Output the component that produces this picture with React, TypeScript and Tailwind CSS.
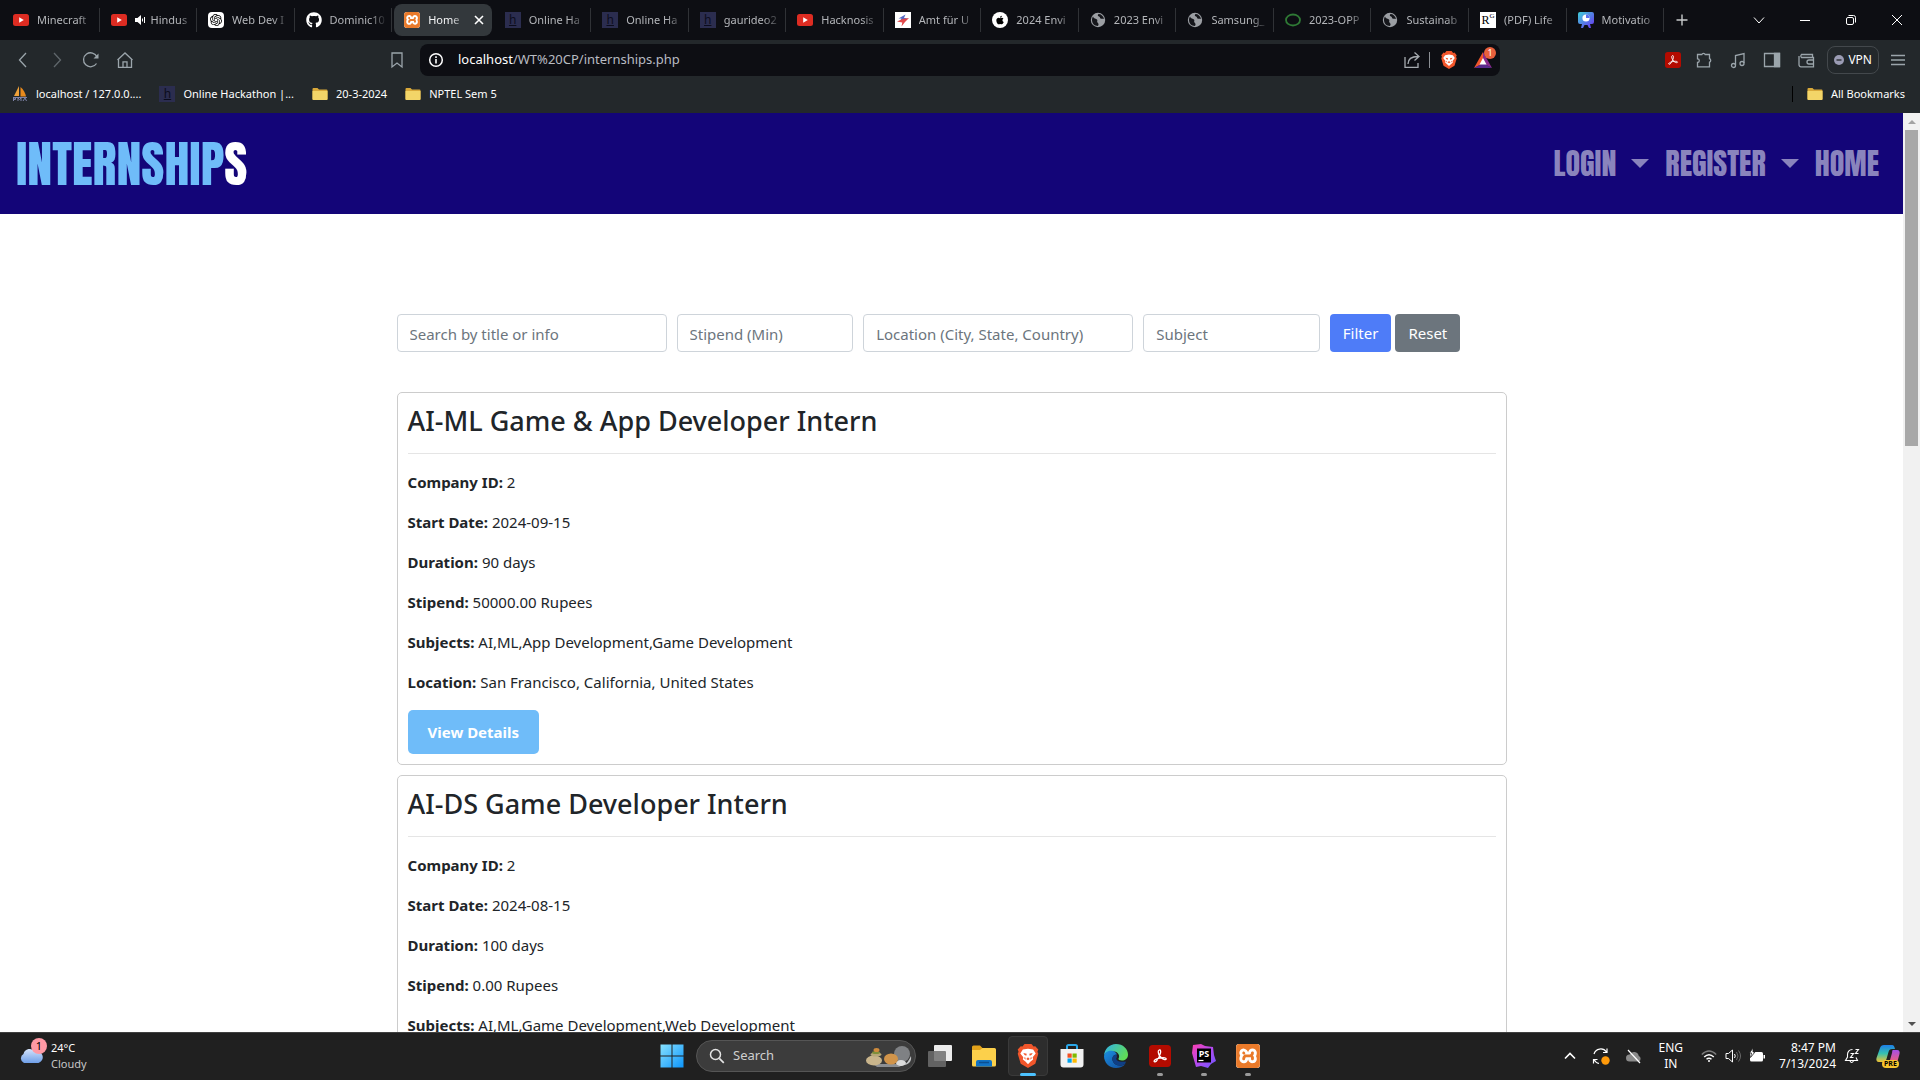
import React from "react";
import { FaApple, FaGithub } from "react-icons/fa";
import { SiOpenai, SiXampp } from "react-icons/si";

type IconProps = { className?: string };

/* ---------- Site icons ---------- */

function YouTubeIcon() {
  return (
    <svg className="h-4 w-4" viewBox="0 0 16 16">
      <rect y="2" width="16" height="12" rx="2.5" fill="#dd2c22" />
      <path d="M6.2 5.3v5.4L10.8 8z" fill="#fff" />
    </svg>
  );
}

function ChatIcon() {
  return (
    <span className="flex h-4 w-4 items-center justify-center rounded-sm bg-white text-black">
      <SiOpenai className="h-3 w-3" />
    </span>
  );
}

function GithubIcon() {
  return <FaGithub className="h-4 w-4 text-white" />;
}

function XamppIcon({ className = "h-4 w-4" }: IconProps) {
  return <SiXampp className={`${className} rounded-[3px] bg-white text-[#ea7a2a]`} />;
}

function HackIcon() {
  return (
    <span className="flex h-4 w-4 items-center justify-center bg-[#2b2d4f] text-xs leading-4 text-[#0b0c1c] underline">
      h
    </span>
  );
}

function AmtIcon() {
  return (
    <svg className="h-4 w-4" viewBox="0 0 16 16">
      <rect width="16" height="16" fill="#fff" />
      <path d="M10.500 2.500 3.500 6.500h3L5 9l8-3H9z" fill="#5468c4" />
      <path d="m2 9.500 5.500-2.500L14 6l-4 4-3.500 4.500.800-4z" fill="#e0484a" />
    </svg>
  );
}

function AppleIcon() {
  return (
    <span className="flex h-4 w-4 items-center justify-center rounded-full bg-white text-black">
      <FaApple className="h-2.5 w-2.5" />
    </span>
  );
}

function GlobeIcon() {
  return (
    <svg className="h-4 w-4" viewBox="0 0 16 16">
      <circle cx="8" cy="8" r="7.200" fill="#9b9ea3" />
      <path d="M3 4.500C4 7 6 6.500 7 7.500s-.5 2 .5 3 1.500 1.500.5 3.500C4 14 2 11 2 8c0-1.500.4-2.500 1-3.500z" fill="#15161b" />
      <path d="M8.500 2c-1 1-1 2 .5 2.500s.5 1.500 1.500 2 2.500 0 3.500.5C13.500 4 11 2 8.500 2z" fill="#15161b" />
    </svg>
  );
}

function RingIcon() {
  return (
    <svg className="h-4 w-4" viewBox="0 0 16 16">
      <ellipse cx="8" cy="8" rx="7" ry="5.500" fill="none" stroke="#2f7a35" strokeWidth="1.800" />
    </svg>
  );
}

function GateIcon() {
  return (
    <span className="flex h-4 w-4 items-center justify-center bg-white font-['Liberation_Serif'] text-xs leading-4 text-black">
      R<sup className="text-[7px] leading-none">G</sup>
    </span>
  );
}

function MotivationIcon() {
  return (
    <svg className="h-4 w-4" viewBox="0 0 16 16">
      <defs>
        <linearGradient id="motiv" x1="0" y1="0" x2="1" y2="1">
          <stop offset="0" stopColor="#3fd0d8" />
          <stop offset="1" stopColor="#6a2ff0" />
        </linearGradient>
      </defs>
      <path d="M2 0h12a2 2 0 0 1 2 2v8a2 2 0 0 1-2 2h-2l1 4h-2l-1.500-3h-3L5 16H3l1-4H2a2 2 0 0 1-2-2V2a2 2 0 0 1 2-2z" fill="url(#motiv)" />
      <circle cx="8" cy="6" r="3.600" fill="#fff" />
      <path d="M8 6V2.400A3.600 3.600 0 0 1 11.600 6z" fill="#5a6ff0" />
    </svg>
  );
}

function SailIcon() {
  return (
    <svg className="h-4 w-4" viewBox="0 0 16 16">
      <path d="M7 0 2 10h5z" fill="#f0a23a" />
      <path d="M8.500 1c3 2.500 5 6 5.500 9.500H8.500z" fill="#e98a1c" />
      <path d="M1 11.500h14M1.500 15v-3h2v1.500h-2M6 15v-3l1.500 1.500L9 12v3M11 15l2-3 1.500 3" fill="none" stroke="#7f83a8" strokeWidth="1" />
    </svg>
  );
}

function FolderIcon() {
  return (
    <svg className="h-4 w-4" viewBox="0 0 16 16">
      <path d="M.5 3a1 1 0 0 1 1-1h4l1.500 1.500h7.500a1 1 0 0 1 1 1V13a1 1 0 0 1-1 1h-13a1 1 0 0 1-1-1z" fill="#d9a93a" />
      <path d="M.5 5h15v8a1 1 0 0 1-1 1h-13a1 1 0 0 1-1-1z" fill="#f3d568" />
    </svg>
  );
}

function AcrobatIcon({ className = "h-4 w-4" }: IconProps) {
  return (
    <svg className={className} viewBox="0 0 24 24">
      <rect width="24" height="24" rx="4" fill="#b30b00" />
      <path
        d="M11 5.500c1.500-.8 2 .9 1.600 3-.7 3.200-2.700 7-4.700 9.300-1 1-2.600.7-2.300-.4.500-1.500 4.400-3 8-3.400 2.800-.3 5.300.2 5.200 1.300-.2 1.300-2.800.8-4.500-.5-2.300-1.700-4-4.800-4.200-7.200-.1-1.100.2-1.800.9-2.100z"
        fill="none"
        stroke="#fff"
        strokeWidth="1.400"
      />
    </svg>
  );
}

function BraveIcon({ className = "h-4 w-4" }: IconProps) {
  return (
    <svg className={className} viewBox="0 0 24 28">
      <path d="M8 0h8l2.500 3 2-.5L24 6.500 23 9l1 2.500-3.500 11.500L12 28 3.500 23 0 11.500 1 9 0 6.500l3.500-4 2 .5z" fill="#f1562b" />
      <path
        d="M6 6.500 12 5.500l6 1 3 4.500-3.500 4.500.5 2.500-3 2.500L12 23.500 9 20.500 6 18l.5-2.500L3 11z"
        fill="#fff"
      />
      <path d="m6.500 10.500 4 .8-.5 2.500-2-1zM17.500 10.500l-4 .8.5 2.500 2-1zM12 15.500l-2 2 2 1.500 2-1.500zM8.500 15l-1 1.500 2 2zM15.500 15l1 1.500-2 2z" fill="#f1562b" />
    </svg>
  );
}

/* ---------- Browser tabs ---------- */

type Tab = { title: string; icon: React.ReactNode; audio?: boolean; active?: boolean };

const tabs: Tab[] = [
  { title: "Minecraft", icon: <YouTubeIcon /> },
  { title: "Hindus", icon: <YouTubeIcon />, audio: true },
  { title: "Web Dev I", icon: <ChatIcon /> },
  { title: "Dominic10", icon: <GithubIcon /> },
  { title: "Home", icon: <XamppIcon />, active: true },
  { title: "Online Ha", icon: <HackIcon /> },
  { title: "Online Ha", icon: <HackIcon /> },
  { title: "gaurideo2", icon: <HackIcon /> },
  { title: "Hacknosis", icon: <YouTubeIcon /> },
  { title: "Amt für U", icon: <AmtIcon /> },
  { title: "2024 Envi", icon: <AppleIcon /> },
  { title: "2023 Envi", icon: <GlobeIcon /> },
  { title: "Samsung_", icon: <GlobeIcon /> },
  { title: "2023-OPP", icon: <RingIcon /> },
  { title: "Sustainab", icon: <GlobeIcon /> },
  { title: "(PDF) Life", icon: <GateIcon /> },
  { title: "Motivatio", icon: <MotivationIcon /> },
];

function SpeakerIcon() {
  return (
    <svg className="h-3 w-3 shrink-0" viewBox="0 0 12 12">
      <path d="M0 4h2.500L6 1v10L2.500 8H0z" fill="#fff" />
      <path d="M7.500 4.500v3M9.500 3v6" stroke="#fff" strokeWidth="1" />
    </svg>
  );
}

function BrowserTab({ tab }: { tab: Tab }) {
  if (tab.active) {
    return (
      <div className="flex min-w-0 flex-1 items-center px-0.5">
        <div className="flex h-8 w-full items-center rounded-lg bg-[#33383c] pr-2 pl-2.5">
          <span className="shrink-0">{tab.icon}</span>
          <span className="ml-2 min-w-0 flex-1 text-[11px] whitespace-nowrap text-gray-100 [mask-image:linear-gradient(to_right,black_60%,transparent)]">
            {tab.title}
          </span>
          <button aria-label="Close tab" className="ml-2 shrink-0">
            <svg className="h-2.5 w-2.5" viewBox="0 0 10 10">
              <path d="m1 1 8 8M9 1 1 9" stroke="#fff" strokeWidth="1.600" />
            </svg>
          </button>
        </div>
      </div>
    );
  }
  return (
    <div className="flex min-w-0 flex-1 items-center">
      <span className="ml-[11px] shrink-0">{tab.icon}</span>
      <span className="ml-2 flex min-w-0 flex-1 items-center gap-1">
        {tab.audio && <SpeakerIcon />}
        <span className="min-w-0 flex-1 text-[11px] whitespace-nowrap text-[#b4b6ba] [mask-image:linear-gradient(to_right,black_70%,transparent)]">
          {tab.title}
        </span>
      </span>
      <span className="ml-1 h-6 w-px shrink-0 bg-[#303236]" />
    </div>
  );
}

function WindowButton({ label, children }: { label: string; children: React.ReactNode }) {
  return (
    <button aria-label={label} className="flex h-10 w-[46px] items-center justify-center">
      <svg className="h-3 w-3" viewBox="0 0 12 12" fill="none" stroke="#fff" strokeWidth="1">
        {children}
      </svg>
    </button>
  );
}

function TabStrip() {
  return (
    <div className="flex h-10 bg-[#0d0e13]">
      <div className="flex min-w-0 flex-1 pl-0.5">
        {tabs.map((tab, i) => (
          <BrowserTab key={i} tab={tab} />
        ))}
      </div>
      <button aria-label="New tab" className="mr-9 flex h-10 w-9 items-center justify-center">
        <svg className="h-3 w-3" viewBox="0 0 12 12">
          <path d="M6 .5v11M.5 6h11" stroke="#c8cacc" strokeWidth="1.400" />
        </svg>
      </button>
      <WindowButton label="Search tabs">
        <path d="m1 3.500 5 5.500 5-5.500" />
      </WindowButton>
      <WindowButton label="Minimize">
        <path d="M1 6.500h10" />
      </WindowButton>
      <WindowButton label="Restore">
        <rect x="1.500" y="3.500" width="7" height="7" rx="1.500" />
        <path d="M3.500 1.500h5a2 2 0 0 1 2 2v5" />
      </WindowButton>
      <WindowButton label="Close">
        <path d="m1 1 10 10M11 1 1 11" />
      </WindowButton>
    </div>
  );
}

/* ---------- Toolbar ---------- */

function ToolButton({ label, dim, children }: { label: string; dim?: boolean; children: React.ReactNode }) {
  return (
    <button aria-label={label} className={dim ? "shrink-0 opacity-50" : "shrink-0"}>
      <svg className="h-[18px] w-[18px]" viewBox="0 0 18 18" fill="none" stroke="#9ba5ab" strokeWidth="1.300">
        {children}
      </svg>
    </button>
  );
}

function Toolbar() {
  return (
    <div className="flex h-10 items-center">
      <div className="flex w-[420px] shrink-0 items-center justify-between pr-3.5 pl-3.5">
        <div className="flex items-center gap-4">
          <ToolButton label="Back">
            <path d="M12 2 5.500 9 12 16" />
          </ToolButton>
          <ToolButton label="Forward" dim>
            <path d="m6 2 6.500 7L6 16" />
          </ToolButton>
          <ToolButton label="Reload">
            <path d="M14.500 12.500A7 7 0 1 1 15 6" />
            <path d="M16.500 2.500v5h-5z" fill="#9ba5ab" stroke="none" />
          </ToolButton>
          <ToolButton label="Home">
            <path d="M2.500 8v8.300h13V8L9 2zM1.500 9 9 2l7.500 7M7 16.300v-5.500h4v5.500" />
          </ToolButton>
        </div>
        <ToolButton label="Bookmark this page">
          <path d="M4 2h10v14l-5-4-5 4z" />
        </ToolButton>
      </div>

      <div className="flex h-8 w-[1080px] min-w-0 shrink items-center rounded-lg bg-[#0d0e13] pr-0.5 pl-2">
        <svg className="h-4 w-4 shrink-0" viewBox="0 0 16 16">
          <circle cx="8" cy="8" r="6.300" fill="none" stroke="#fff" strokeWidth="1.500" />
          <path d="M8 7v4.500M8 4.300v1.600" stroke="#fff" strokeWidth="1.600" />
        </svg>
        <a href="#" aria-label="Address" className="ml-3.5 flex-1 text-[13px] text-[#b9bcc2]">
          <span className="text-white">localhost</span>/WT%20CP/internships.php
        </a>
        <button aria-label="Share" className="mr-2">
          <svg className="h-[18px] w-[18px]" viewBox="0 0 18 18" fill="none" stroke="#a6abb0" strokeWidth="1.300">
            <path d="M2 6v10.300h13V12M5 13c0-5 3.500-7.500 10-7.500M11.500 1.500l4.500 4-4.500 4" />
          </svg>
        </button>
        <span className="h-4 w-px bg-[#8b8f94]" />
        <button aria-label="Brave Shields" className="ml-2.5">
          <BraveIcon className="h-[18px] w-[18px]" />
        </button>
        <button aria-label="Brave Rewards" className="relative ml-4 pr-1.5">
          <svg className="h-[18px] w-[18px]" viewBox="0 0 18 18">
            <path d="M9 1 0 17l9-4.500z" fill="#f1562b" />
            <path d="m9 1 9 16-9-4.500z" fill="#8a2a8c" />
            <path d="m0 17 9-5 9 5z" fill="#5a2a8c" />
            <path d="m9 7 3.500 6.500h-7z" fill="#fff" />
          </svg>
          <span className="absolute -top-1 right-0.5 flex h-3 w-3 items-center justify-center rounded-full bg-[#e8603c] text-[9px] leading-3 text-white">
            1
          </span>
        </button>
      </div>

      <div className="ml-auto flex shrink-0 items-center pr-[15px]">
        <button aria-label="Acrobat" className="mr-3.5">
          <AcrobatIcon />
        </button>
        <ToolButton label="Extensions">
          <path d="M2.500 3.500h4.300a1.800 1.800 0 0 1 3.400 0h4.300v4.200a1.800 1.800 0 0 1 0 3.400v4.700h-12v-4.300a1.800 1.800 0 0 0 0-3.600z" />
        </ToolButton>
        <span className="w-4" />
        <ToolButton label="Media">
          <path d="M6.500 14V4.500L15 2.500V12" />
          <circle cx="4.500" cy="14.500" r="2" />
          <circle cx="13" cy="12.500" r="2" />
        </ToolButton>
        <span className="w-4" />
        <ToolButton label="Sidebar">
          <path d="M1.500 2.500h15v13h-15z" />
          <path d="M11.500 2.500h5v13h-5z" fill="#9ba5ab" />
        </ToolButton>
        <span className="w-4" />
        <ToolButton label="Wallet">
          <path d="M15.500 6.500v-3h-11a2 2 0 0 0 0 3h12v9.300H4a2 2 0 0 1-2-2V5M16.500 9H12a2 2 0 0 0 0 4h4.500" />
        </ToolButton>
        <button className="ml-3 flex h-7 items-center gap-1 rounded-lg border border-[#43484c] px-1.5 text-xs text-white">
          <svg className="h-2.5 w-2.5" viewBox="0 0 10 10">
            <circle cx="5" cy="5" r="5" fill="#9b9cb4" />
            <path d="M2.500 5h5" stroke="#23282b" strokeWidth="1.300" />
          </svg>
          VPN
        </button>
        <button aria-label="Menu" className="ml-3">
          <svg className="h-3.5 w-3.5" viewBox="0 0 14 14">
            <path d="M0 2.500h14M0 7h14M0 11.500h14" stroke="#9ba5ab" strokeWidth="1.300" />
          </svg>
        </button>
      </div>
    </div>
  );
}

const bookmarks = [
  { title: "localhost / 127.0.0....", icon: <SailIcon /> },
  { title: "Online Hackathon |...", icon: <HackIcon /> },
  { title: "20-3-2024", icon: <FolderIcon /> },
  { title: "NPTEL Sem 5", icon: <FolderIcon /> },
];

function BookmarksBar() {
  return (
    <div className="flex h-[33px] items-start pt-1.5 pr-[15px] pl-3 text-[11px] text-white">
      <div className="flex gap-[18px]">
        {bookmarks.map((b) => (
          <a key={b.title} href="#" className="flex items-center gap-2">
            {b.icon}
            {b.title}
          </a>
        ))}
      </div>
      <div className="ml-auto flex items-center gap-3.5">
        <span className="h-4 w-px bg-black" />
        <a href="#" className="flex items-center gap-2">
          <FolderIcon />
          All Bookmarks
        </a>
      </div>
    </div>
  );
}

/* ---------- Page ---------- */

function Caret() {
  return <span className="h-0 w-0 border-x-9 border-t-9 border-x-transparent border-t-[#8a84bd]" />;
}

function SiteNav() {
  return (
    <nav className="flex h-[101px] items-center justify-between bg-[#130578] pr-6 pl-4 font-['Anton']">
      <a href="#" className="text-[50px] leading-none text-[#6fbcf9]">
        INTERNSHIP<span className="text-white">S</span>
      </a>
      <div className="flex items-center gap-4 text-3xl leading-none text-[#8a84bd]">
        <button className="flex items-center gap-[15px]">
          LOGIN
          <Caret />
        </button>
        <button className="flex items-center gap-[15px]">
          REGISTER
          <Caret />
        </button>
        <a href="#">HOME</a>
      </div>
    </nav>
  );
}

const inputClass =
  "h-[38px] w-full rounded border border-[#ced4da] bg-white px-3 pt-0.5 text-[15px] text-[#495057] placeholder:text-[#6c757d]";

function FilterForm() {
  return (
    <form className="-mx-[5px] grid grid-cols-12" onSubmit={(e) => e.preventDefault()}>
      <div className="col-span-3 px-[5px]">
        <input aria-label="Search" placeholder="Search by title or info" className={inputClass} />
      </div>
      <div className="col-span-2 px-[5px]">
        <input aria-label="Stipend" placeholder="Stipend (Min)" className={inputClass} />
      </div>
      <div className="col-span-3 px-[5px]">
        <input aria-label="Location" placeholder="Location (City, State, Country)" className={inputClass} />
      </div>
      <div className="col-span-2 px-[5px]">
        <input aria-label="Subject" placeholder="Subject" className={inputClass} />
      </div>
      <div className="col-span-2 flex gap-1 px-[5px] text-[15px] text-white">
        <button className="h-[38px] rounded bg-[#4e7cf8] px-[13px]">Filter</button>
        <button className="h-[38px] rounded bg-[#6c757d] px-[13px]">Reset</button>
      </div>
    </form>
  );
}

type Internship = { title: string; fields: [string, string][] };

const internships: Internship[] = [
  {
    title: "AI-ML Game & App Developer Intern",
    fields: [
      ["Company ID", "2"],
      ["Start Date", "2024-09-15"],
      ["Duration", "90 days"],
      ["Stipend", "50000.00 Rupees"],
      ["Subjects", "AI,ML,App Development,Game Development"],
      ["Location", "San Francisco, California, United States"],
    ],
  },
  {
    title: "AI-DS Game Developer Intern",
    fields: [
      ["Company ID", "2"],
      ["Start Date", "2024-08-15"],
      ["Duration", "100 days"],
      ["Stipend", "0.00 Rupees"],
      ["Subjects", "AI,ML,Game Development,Web Development"],
    ],
  },
];

function InternshipCard({ item }: { item: Internship }) {
  return (
    <article className="rounded-[5px] border border-[#ccc] p-2.5 text-[15px] leading-6 text-[#212529]">
      <h3 className="text-[27px] leading-9 font-medium">{item.title}</h3>
      <hr className="mt-3.5 mb-4 border-[#e5e5e5]" />
      {item.fields.map(([label, value]) => (
        <p key={label} className="mb-4">
          <strong className="font-bold">{label}:</strong> {value}
        </p>
      ))}
      <button className="h-11 rounded-[5px] bg-[#6fbcf9] px-5 font-bold text-white">View Details</button>
    </article>
  );
}

function Scrollbar() {
  return (
    <div className="flex w-[17px] shrink-0 flex-col items-center bg-[#f1f1f1]">
      <div className="flex h-[17px] items-center">
        <span className="h-0 w-0 border-x-4 border-b-4 border-x-transparent border-b-[#a3a3a3]" />
      </div>
      <div className="h-[316px] w-[13px] bg-[#a8a8a8]" />
      <div className="mt-auto flex h-[17px] items-center">
        <span className="h-0 w-0 border-x-4 border-t-4 border-x-transparent border-t-[#505050]" />
      </div>
    </div>
  );
}

/* ---------- Taskbar ---------- */

function StartIcon() {
  return (
    <svg className="h-6 w-6" viewBox="0 0 24 24">
      <defs>
        <linearGradient id="start" gradientUnits="userSpaceOnUse" x1="0" y1="0" x2="24" y2="24">
          <stop offset="0" stopColor="#8ae3ff" />
          <stop offset="1" stopColor="#0a93fb" />
        </linearGradient>
      </defs>
      <path d="M.5.500h11v11H.5zM12.500.500h11v11h-11zM.5 12.500h11v11H.5zM12.500 12.500h11v11h-11z" fill="url(#start)" />
    </svg>
  );
}

function StonesArt() {
  return (
    <svg className="h-7 w-12" viewBox="0 0 48 28">
      <path d="M8 22h32l-6 3H12z" fill="#8d8f92" />
      <circle cx="37" cy="12" r="8" fill="#7f8184" />
      <path d="M46 14c1 6-3 9-8 9 4-1 6-5 8-9z" fill="#c4c6c8" />
      <ellipse cx="36" cy="21" rx="5" ry="3" fill="#dcdcdc" />
      <ellipse cx="26" cy="17" rx="7" ry="5.500" fill="#d1944a" />
      <ellipse cx="9" cy="18.500" rx="8" ry="5" fill="#c9b58c" />
      <ellipse cx="11" cy="12.500" rx="5.500" ry="2" fill="#b7a878" />
      <ellipse cx="11" cy="10.500" rx="4" ry="1.500" fill="#7f8f3a" />
      <ellipse cx="11.500" cy="8" rx="3" ry="2" fill="#cf8b3c" />
    </svg>
  );
}

function TaskViewIcon() {
  return (
    <svg className="h-6 w-6" viewBox="0 0 24 24">
      <rect x="6" y="1" width="18" height="16" rx="1" fill="#ececec" />
      <rect x="0" y="7" width="18" height="16" rx="1" fill="#6f6f6f" fillOpacity=".85" />
    </svg>
  );
}

function ExplorerIcon() {
  return (
    <svg className="h-6 w-6" viewBox="0 0 24 24">
      <path d="M0 3a1.500 1.500 0 0 1 1.500-1.500H8L10.500 4H22v6H0z" fill="#e3a21a" />
      <path d="M0 6h8l2.500-2H22.500A1.500 1.500 0 0 1 24 5.500V21a1.500 1.500 0 0 1-1.500 1.500h-21A1.500 1.500 0 0 1 0 21z" fill="#fcd04b" />
      <path d="M4 22.500V18a2 2 0 0 1 2-2h12a2 2 0 0 1 2 2v4.500z" fill="#1173c5" />
      <path d="M7 18.500h10" stroke="#0b4f91" strokeWidth="1.500" />
    </svg>
  );
}

function StoreIcon() {
  return (
    <svg className="h-6 w-6" viewBox="0 0 24 24">
      <path d="M7 5V2.500A1.500 1.500 0 0 1 8.500 1h7A1.500 1.500 0 0 1 17 2.500V5" fill="none" stroke="#2ba8ea" strokeWidth="2" />
      <path d="M.5 5h23v15.500a3 3 0 0 1-3 3h-17a3 3 0 0 1-3-3z" fill="#f2f2f2" />
      <path d="M7.500 9.500h4.200v4.200H7.500z" fill="#f25022" />
      <path d="M12.500 9.500h4.200v4.200h-4.200z" fill="#7fba00" />
      <path d="M7.500 14.500h4.200v4.200H7.500z" fill="#00a4ef" />
      <path d="M12.500 14.500h4.200v4.200h-4.200z" fill="#ffb900" />
    </svg>
  );
}

function EdgeIcon() {
  return (
    <svg className="h-6 w-6" viewBox="0 0 24 24">
      <defs>
        <linearGradient id="edgeTop" x1="0" y1="0" x2="1" y2=".5">
          <stop offset="0" stopColor="#2fb0ee" />
          <stop offset="1" stopColor="#5fdc58" />
        </linearGradient>
        <linearGradient id="edgeLow" x1="0" y1="0" x2="1" y2="1">
          <stop offset="0" stopColor="#1b8fe0" />
          <stop offset="1" stopColor="#124c9c" />
        </linearGradient>
      </defs>
      <path d="M0 11.500C.5 5 5.500 0 12 0c7 0 12 5 12 10.500 0 4-3 6-6 6-2.500 0-4-1-3.500-2 1.500-2 .5-6.500-4.500-7C5 7 1 9 0 11.500z" fill="url(#edgeTop)" />
      <path d="M0 12c1-4.500 5.500-6 9-5 2 .6 3.500 2 4 3.500-4 0-5.500 3.500-4 7 1.800 4 7 5.500 12.500 2.500C19 22.500 16 24 12 24 5 24 0 18.500 0 12z" fill="url(#edgeLow)" />
      <path d="M9 17.500c-1.500-3.500 0-6.500 3.500-7 .8 2 .2 3.500-.3 4 0 2 3 4 9.600 3-.1.900-.2 1.800-.9 2.500C16 23 10.800 21.500 9 17.500z" fill="#0f3f86" />
    </svg>
  );
}

function PhpStormIcon() {
  return (
    <span className="relative flex h-6 w-6 items-center justify-center">
      <svg className="absolute inset-0 h-6 w-6" viewBox="0 0 24 24">
        <defs>
          <linearGradient id="storm" x1="0" y1="0" x2="1" y2="1">
            <stop offset="0" stopColor="#ff3fae" />
            <stop offset=".5" stopColor="#b34bf0" />
            <stop offset="1" stopColor="#6b57ff" />
          </linearGradient>
        </defs>
        <path d="m1 1 8-1 4 2 8 1 1 8 2 6-5 3-3 4-7-2-5 1-2-7-2-7z" fill="url(#storm)" />
        <path d="M5 4.500h14v14H5z" fill="#000" />
        <path d="M6.500 16.500h5" stroke="#fff" strokeWidth="1.200" />
      </svg>
      <span className="relative mb-1.5 text-[9px] leading-none font-bold text-white">PS</span>
    </span>
  );
}

function TaskItem({ label, running, children }: { label: string; running?: boolean; children: React.ReactNode }) {
  return (
    <button aria-label={label} className="relative flex h-10 w-11 items-center justify-center">
      {children}
      {running && <span className="absolute bottom-0 h-[3px] w-1.5 rounded-full bg-[#9a9a9a]" />}
    </button>
  );
}

function Weather() {
  return (
    <button className="flex items-center gap-2 text-left text-[11px] leading-4">
      <span className="relative h-6 w-6">
        <svg className="h-6 w-6" viewBox="0 0 24 24">
          <defs>
            <linearGradient id="cloud" x1="0" y1="0" x2="0" y2="1">
              <stop offset="0" stopColor="#d4e3fb" />
              <stop offset="1" stopColor="#6f9fe8" />
            </linearGradient>
          </defs>
          <path d="M5 19a5 5 0 0 1-.5-9A6.500 6.500 0 0 1 16 7.500a5.500 5.500 0 0 1 3.500 11.500z" fill="url(#cloud)" />
        </svg>
        <span className="absolute -top-1.5 left-3 flex h-4 w-4 items-center justify-center rounded-full bg-[#ff99a4] text-[11px] text-black">
          1
        </span>
      </span>
      <span>
        <span className="block text-white">24°C</span>
        <span className="block text-[#c7c7c7]">Cloudy</span>
      </span>
    </button>
  );
}

function CopilotIcon() {
  return (
    <span className="relative h-6 w-6">
      <svg className="h-6 w-6" viewBox="0 0 24 24">
        <defs>
          <linearGradient id="coA" x1="0" y1="0" x2="0" y2="1">
            <stop offset="0" stopColor="#1d7fe8" />
            <stop offset=".5" stopColor="#35c0b0" />
            <stop offset="1" stopColor="#f2c230" />
          </linearGradient>
          <linearGradient id="coB" x1="0" y1="0" x2="0" y2="1">
            <stop offset="0" stopColor="#a64fe8" />
            <stop offset="1" stopColor="#f5626e" />
          </linearGradient>
        </defs>
        <path d="M8 1h8c2 0 2.500 2 3 4h-3c-2 0-3 1-3.500 3l-2 7c-.6 2-1.500 3-3.500 3H3c-2.500 0-3-2-2.500-4L4 4c.6-2 2-3 4-3z" fill="url(#coA)" />
        <path d="M17 6h4c2.500 0 3 2 2.500 4l-2.500 9H11c2 0 2.600-1.500 3-3l2-7c.4-1.500 0-3 1-3z" fill="url(#coB)" />
      </svg>
      <span className="absolute top-4 left-1.5 rounded-sm bg-[#f7c52e] px-0.5 text-[7px] leading-2 font-bold text-black">PRE</span>
    </span>
  );
}

function Tray() {
  return (
    <div className="flex items-center justify-end pr-5 text-xs leading-4 text-white">
      <button aria-label="Show hidden icons" className="mr-4">
        <svg className="h-3 w-3" viewBox="0 0 12 12">
          <path d="m1 8.500 5-5 5 5" fill="none" stroke="#fff" strokeWidth="1.600" />
        </svg>
      </button>
      <svg className="mr-4 h-[18px] w-[18px]" viewBox="0 0 18 18">
        <path d="M2 7a7 7 0 0 1 12.500-2M15 1.500V5.500h-4M1.500 16.500v-4h4M2 12.500a7 7 0 0 0 5 4" fill="none" stroke="#fff" strokeWidth="1.200" />
        <circle cx="13.500" cy="13.500" r="4.200" fill="#ff9a0a" />
      </svg>
      <svg className="mr-4 h-4 w-4 overflow-visible" viewBox="0 0 16 16">
        <path d="M3.500 13.500a3.500 3.500 0 0 1 0-7 5 5 0 0 1 9.300 1.500 3 3 0 0 1 0 5.500z" fill="#8a8a8a" />
        <path d="m2 2 12 13" stroke="#fff" strokeWidth="1.200" />
      </svg>
      <button className="mr-[18px] text-center">
        ENG
        <br />
        IN
      </button>
      <svg className="mr-2 h-4 w-4" viewBox="0 0 16 16" fill="none" stroke="#fff" strokeWidth="1.400">
        <path d="M.8 6.500q7.200-7 14.400 0" stroke="#7a7a7a" />
        <path d="M3.200 9q4.800-4.600 9.600 0M5.500 11.300q2.500-2.300 5 0" />
        <circle cx="8" cy="13" r="1" fill="#fff" stroke="none" />
      </svg>
      <svg className="mr-2 h-4 w-4" viewBox="0 0 16 16" fill="none" stroke="#fff">
        <path d="M1 5.500h2.500L7.500 2v12L3.500 10.500H1zM9.500 6q1.500 2 0 4" />
        <path d="M11.500 4q3 4 0 8M13.500 2.500q4 5.500 0 11" stroke="#6b6b6b" />
      </svg>
      <svg className="mr-3.5 h-4 w-4" viewBox="0 0 16 16">
        <rect x="1" y="4" width="13" height="9.500" rx="1.500" fill="#fff" />
        <path d="M14.500 7H16v3.500h-1.500z" fill="#fff" />
        <path d="M4 0 .5 5h2L1.500 9.500 6 4H4z" fill="#fff" stroke="#202020" strokeWidth=".8" />
      </svg>
      <button className="mr-2 text-right">
        8:47 PM
        <br />
        7/13/2024
      </button>
      <svg className="mr-4 h-4 w-4" viewBox="0 0 16 16" fill="none" stroke="#fff" strokeWidth="1.100">
        <path d="M8.500 1.500C5 1.500 3.500 4 3.500 6.500V9L1.500 12.500h12L12 9.500M6 13q1.500 3 3.500 0M6.500 5.500h3l-3 4h3M11.500 1.500h3l-3 4h3" />
      </svg>
      <CopilotIcon />
    </div>
  );
}

function Taskbar() {
  return (
    <footer className="grid h-12 shrink-0 grid-cols-[1fr_auto_1fr] items-center border-t border-[#404040] bg-[#202020] pb-px">
      <div className="pl-[19px]">
        <Weather />
      </div>
      <div className="flex items-center">
        <TaskItem label="Start">
          <StartIcon />
        </TaskItem>
        <label className="mx-0.5 flex h-8 w-[220px] items-center rounded-full border border-[#555] bg-[#3c3c3c] pr-0.5 pl-3">
          <svg className="h-4 w-4 shrink-0" viewBox="0 0 16 16">
            <circle cx="6.500" cy="6.500" r="5" fill="none" stroke="#e4e4e4" strokeWidth="1.500" />
            <path d="m10.300 10.300 4.500 4.500" stroke="#e4e4e4" strokeWidth="1.700" />
          </svg>
          <input
            aria-label="Search"
            placeholder="Search"
            className="ml-2 min-w-0 flex-1 bg-transparent text-[13px] text-white placeholder:text-[#cfcfcf]"
          />
          <StonesArt />
        </label>
        <TaskItem label="Task View">
          <TaskViewIcon />
        </TaskItem>
        <TaskItem label="File Explorer">
          <ExplorerIcon />
        </TaskItem>
        <button
          aria-label="Brave"
          className="relative mx-0.5 flex h-10 w-10 items-center justify-center rounded border border-[#3a3a3a] bg-[#2d2d2d]"
        >
          <BraveIcon className="h-6 w-6" />
          <span className="absolute -bottom-px h-[3px] w-4 rounded-full bg-[#4cc2ff]" />
        </button>
        <TaskItem label="Microsoft Store">
          <StoreIcon />
        </TaskItem>
        <TaskItem label="Edge">
          <EdgeIcon />
        </TaskItem>
        <TaskItem label="Acrobat" running>
          <AcrobatIcon className="h-[22px] w-[22px]" />
        </TaskItem>
        <TaskItem label="PhpStorm" running>
          <PhpStormIcon />
        </TaskItem>
        <TaskItem label="XAMPP" running>
          <XamppIcon className="h-6 w-6" />
        </TaskItem>
      </div>
      <Tray />
    </footer>
  );
}

export default function App() {
  return (
    <div className="flex h-screen flex-col overflow-hidden bg-white font-['Noto_Sans',sans-serif]">
      <header className="shrink-0 bg-[#23282b]">
        <TabStrip />
        <Toolbar />
        <BookmarksBar />
      </header>
      <div className="flex min-h-0 flex-1">
        <div className="min-w-0 flex-1 overflow-hidden">
          <SiteNav />
          <main className="mx-auto mt-[100px] max-w-[1110px]">
            <FilterForm />
            <div className="mt-10 flex flex-col gap-2.5">
              {internships.map((item) => (
                <InternshipCard key={item.title} item={item} />
              ))}
            </div>
          </main>
        </div>
        <Scrollbar />
      </div>
      <Taskbar />
    </div>
  );
}
